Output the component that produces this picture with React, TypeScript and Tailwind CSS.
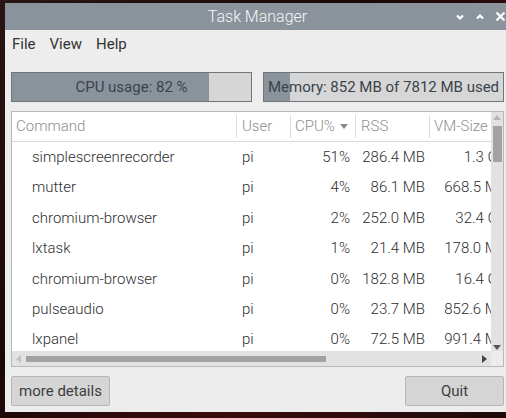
import React from "react";

const rows = [
  ["simplescreenrecorder", "pi", "51%", "286.4 MB", "1.3 GB"],
  ["mutter", "pi", "4%", "86.1 MB", "668.5 MB"],
  ["chromium-browser", "pi", "2%", "252.0 MB", "32.4 GB"],
  ["lxtask", "pi", "1%", "21.4 MB", "178.0 MB"],
  ["chromium-browser", "pi", "0%", "182.8 MB", "16.4 GB"],
  ["pulseaudio", "pi", "0%", "23.7 MB", "852.6 MB"],
  ["lxpanel", "pi", "0%", "72.5 MB", "991.4 MB"],
];

export default function App() {
  return (
    <div
      className="w-[506px] h-[418px] overflow-hidden pl-[5px] pt-[3px] bg-[linear-gradient(135deg,#2a1414_0%,#1a0808_40%,#3a0c0c_70%,#1c0a0a_100%)]"
      style={{ fontFamily: "Roboto, 'Noto Sans', sans-serif" }}
    >
      <div className="w-[505px] h-[409px] flex flex-col bg-[#ededed]">
        {/* Title bar */}
        <div className="h-[27px] bg-[#8a939b] flex items-center relative shrink-0">
          <div className="flex-1 text-center text-[16px] font-light text-[#f6f6f6] leading-none pt-[1px]">Task Manager</div>
          <div className="absolute right-[4px] top-0 h-full flex items-center gap-[10px] text-white">
            <svg width="10" height="10" viewBox="0 0 10 10"><path d="M2 3.5 L5 6.5 L8 3.5" stroke="white" strokeWidth="2.2" fill="none" /></svg>
            <svg width="10" height="10" viewBox="0 0 10 10"><path d="M2 6.5 L5 3.5 L8 6.5" stroke="white" strokeWidth="2.2" fill="none" /></svg>
            <svg width="11" height="11" viewBox="0 0 11 11"><path d="M1.5 1.5 L9.5 9.5 M9.5 1.5 L1.5 9.5" stroke="white" strokeWidth="2.2" fill="none" /></svg>
          </div>
        </div>
        {/* Menu */}
        <div className="h-[28px] flex items-center pl-[7px] gap-[14px] text-[15px] text-[#333] shrink-0">
          <span>File</span>
          <span>View</span>
          <span>Help</span>
        </div>
        <div className="flex-1 flex flex-col px-[6px] pt-[14px]">
          {/* Bars */}
          <div className="flex gap-[11px] h-[30px] shrink-0">
            <div className="relative w-[241px] h-full border border-[#6f767c] bg-[#d6d6d6]">
              <div className="absolute left-0 top-0 bottom-0 w-[197px] bg-[#8a939b]" />
              <div className="absolute inset-0 flex items-center justify-center text-[15px] text-[#3a434b]">CPU usage: 82 %</div>
            </div>
            <div className="relative w-[241px] h-full border border-[#6f767c] bg-[#d6d6d6]">
              <div className="absolute left-0 top-0 bottom-0 w-[26px] bg-[#8a939b]" />
              <div className="absolute inset-0 flex items-center justify-center text-[15px] text-[#3a434b] whitespace-nowrap">Memory: 852 MB of 7812 MB used</div>
            </div>
          </div>
          {/* Table */}
          <div className="mt-[9px] w-[493px] h-[256px] border border-[#b8b8b8] bg-white flex flex-col shrink-0">
            <div className="flex flex-1 min-h-0">
              <div className="w-[479px] flex flex-col overflow-hidden">
                {/* Header */}
                <div className="h-[30px] border-b border-[#d8d8d8] flex items-center text-[15px] font-light text-[#8e8e8e] shrink-0 whitespace-nowrap">
                  <div className="w-[224px] pl-[4px] shrink-0">Command</div>
                  <div className="w-[54px] shrink-0 h-[23px] border-l border-[#dcdcdc] pl-[5px] flex items-center">User</div>
                  <div className="w-[65px] shrink-0 h-[23px] border-l border-[#dcdcdc] pl-[4px] flex items-center gap-[5px]">
                    CPU%
                    <svg width="8" height="6" viewBox="0 0 8 6"><path d="M0 0 L8 0 L4 5 Z" fill="#8a8a8a" /></svg>
                  </div>
                  <div className="w-[74px] shrink-0 h-[23px] border-l border-[#dcdcdc] pl-[5px] flex items-center">RSS</div>
                  <div className="w-[80px] shrink-0 h-[23px] border-l border-[#dcdcdc] pl-[4px] flex items-center">VM-Size</div>
                </div>
                {rows.map((r, i) => (
                  <div key={i} className="h-[30.4px] flex items-center text-[15px] font-light text-[#2e2e2e] shrink-0 whitespace-nowrap">
                    <div className="w-[224px] pl-[20px] shrink-0">{r[0]}</div>
                    <div className="w-[54px] pl-[6px] shrink-0">{r[1]}</div>
                    <div className="w-[65px] pr-[5px] text-right shrink-0">{r[2]}</div>
                    <div className="w-[74px] pr-[4px] text-right shrink-0">{r[3]}</div>
                    <div className="w-[80px] pr-[2px] text-right shrink-0">{r[4]}</div>
                  </div>
                ))}
              </div>
              {/* vertical scrollbar */}
              <div className="w-[12px] bg-[#e2e2e2] flex flex-col items-center relative">
                <svg className="mt-[3px]" width="8" height="5" viewBox="0 0 8 5"><path d="M0 5 L4 0 L8 5 Z" fill="#b5b5b5" /></svg>
                <div className="mt-[6px] w-[9px] h-[36px] bg-[#a2a2a2]" />
                <div className="flex-1" />
                <svg className="mb-[1px]" width="8" height="5" viewBox="0 0 8 5"><path d="M0 0 L8 0 L4 5 Z" fill="#555" /></svg>
              </div>
            </div>
            {/* horizontal scrollbar */}
            <div className="h-[15px] flex shrink-0">
              <div className="w-[479px] bg-[#e2e2e2] flex items-center pl-[4px] pr-[4px]">
                <svg width="5" height="8" viewBox="0 0 5 8"><path d="M5 0 L0 4 L5 8 Z" fill="#c0c0c0" /></svg>
                <div className="ml-[5px] w-[300px] h-[6px] bg-[#a2a2a2]" />
                <div className="flex-1" />
                <svg width="5" height="8" viewBox="0 0 5 8"><path d="M0 0 L5 4 L0 8 Z" fill="#444" /></svg>
              </div>
              <div className="w-[12px] bg-[#ececec]" />
            </div>
          </div>
          {/* Buttons */}
          <div className="mt-[9px] flex justify-between">
            <div className="w-[99px] h-[30px] bg-[#d5d5d5] border border-[#b6b6b6] rounded-[2px] flex items-center justify-center text-[15px] text-[#3e3e3e]">more details</div>
            <div className="w-[99px] h-[30px] bg-[#d5d5d5] border border-[#b6b6b6] rounded-[2px] flex items-center justify-center text-[15px] text-[#3e3e3e]">Quit</div>
          </div>
        </div>
      </div>
    </div>
  );
}
